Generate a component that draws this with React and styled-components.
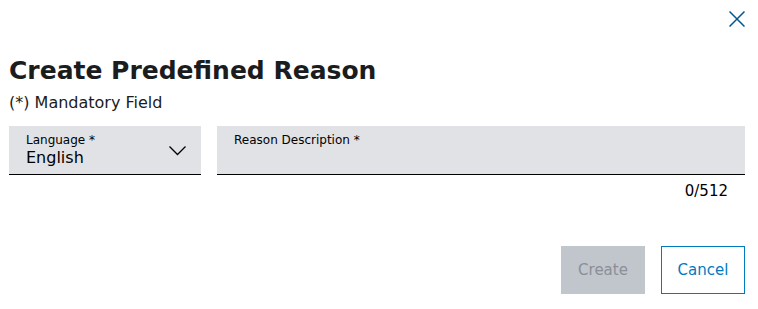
import React from "react";
import styled, { createGlobalStyle } from "styled-components";

const GlobalStyle = createGlobalStyle`
  body {
    margin: 0;
    background: #fff;
    font-family: "DejaVu Sans", "Noto Sans", Arial, sans-serif;
    color: #000;
  }
`;

const Dialog = styled.div`
  width: 758px;
  height: 309px;
  box-sizing: border-box;
  padding: 0 13px 0 9px;
  display: flex;
  flex-direction: column;
`;

const CloseRow = styled.div`
  height: 38px;
  display: flex;
  justify-content: flex-end;
  align-items: center;
`;

const CloseButton = styled.button`
  border: none;
  background: none;
  padding: 0;
  width: 16px;
  height: 16px;
  display: flex;
  cursor: pointer;
  color: #005691;
`;

const Title = styled.h1`
  margin: 17px 0 0;
  font-size: 25px;
  line-height: 32px;
  font-weight: 700;
  color: #1a1c1d;
`;

const Hint = styled.div`
  margin-top: 6px;
  font-size: 16px;
  line-height: 20px;
  color: #1a1c1d;
`;

const FieldRow = styled.div`
  margin-top: 13px;
  display: flex;
  gap: 16px;
`;

const Field = styled.div`
  position: relative;
  flex: ${(p) => (p.$grow ? 1 : "0 0 192px")};
  height: 49px;
  box-sizing: border-box;
  background: #e0e2e5;
  border-bottom: 1px solid #000;
  padding: 6px 16px 0 17px;
`;

const Label = styled.div`
  font-size: 12px;
  line-height: 16px;
  color: #000;
`;

const Value = styled.div`
  font-size: 16px;
  line-height: 20px;
  color: #000;
`;

const Chevron = styled.svg`
  position: absolute;
  right: 15px;
  top: 20px;
`;

const Counter = styled.div`
  margin-top: 6px;
  padding-right: 17px;
  text-align: right;
  font-size: 15px;
  line-height: 20px;
  color: #000;
`;

const Actions = styled.div`
  margin-top: 45px;
  display: flex;
  justify-content: flex-end;
  gap: 16px;
`;

const Button = styled.button`
  height: 48px;
  width: 84px;
  padding: 0;
  box-sizing: border-box;
  font-family: inherit;
  font-size: 15px;
  border: 1px solid ${(p) => (p.$secondary ? "#007bc0" : "#c1c5cc")};
  background: ${(p) => (p.$secondary ? "#fff" : "#c1c5cc")};
  color: ${(p) => (p.$secondary ? "#007bc0" : "#8a9097")};
  cursor: ${(p) => (p.disabled ? "default" : "pointer")};
`;

export default function App() {
  return (
    <>
      <GlobalStyle />
      <Dialog>
        <CloseRow>
          <CloseButton aria-label="Close">
            <svg width="16" height="16" viewBox="0 0 16 16">
              <path d="M0.5 0.5 L15.5 15.5 M15.5 0.5 L0.5 15.5" stroke="currentColor" strokeWidth="1.5" fill="none" />
            </svg>
          </CloseButton>
        </CloseRow>
        <Title>Create Predefined Reason</Title>
        <Hint>(*) Mandatory Field</Hint>
        <FieldRow>
          <Field>
            <Label>Language *</Label>
            <Value>English</Value>
            <Chevron width="17" height="10" viewBox="0 0 17 10">
              <path d="M0.5 0.5 L8.5 8.5 L16.5 0.5" stroke="#000" strokeWidth="1.3" fill="none" />
            </Chevron>
          </Field>
          <Field $grow>
            <Label>Reason Description *</Label>
          </Field>
        </FieldRow>
        <Counter>0/512</Counter>
        <Actions>
          <Button disabled>Create</Button>
          <Button $secondary>Cancel</Button>
        </Actions>
      </Dialog>
    </>
  );
}
